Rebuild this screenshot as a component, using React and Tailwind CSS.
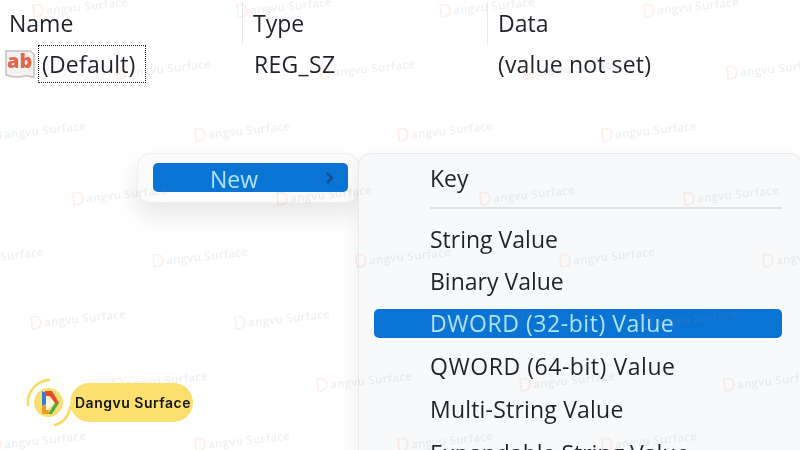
const font = { fontFamily: '"Open Sans", "Noto Sans", sans-serif' }

// watermark rows: start x, y, repeated every 203px
const marks = []
const rows = [
  [32, 14], [115, 76], [-10, 138], [72, 202], [-52, 264], [30, 326], [112, 388], [-10, 448],
]
rows.forEach(([sx, y]) => {
  for (let i = 0; i < 5; i++) marks.push({ x: sx + i * 203.5, y })
})

function Watermark({ x, y }) {
  return (
    <div
      className="absolute flex items-center origin-bottom-left -rotate-[6deg] text-[11.5px] leading-none font-semibold tracking-[0.3px] text-[#8a94a3]/15 whitespace-nowrap pointer-events-none"
      style={{ left: x, top: y - 12 }}
    >
      <span className="text-[19px] font-normal leading-none text-[#f0915f]/15 mr-px">D</span>
      <span>angvu Surface</span>
    </div>
  )
}

function AbIcon() {
  return (
    <svg width="32" height="32" viewBox="0 0 32 32" className="shrink-0">
      <path d="M2 3h24l4 3v23c-3 1-5-2-9-1-5 1-12 2-19-1z" fill="#f4f1ef" stroke="#c4c2c1" strokeWidth="1.5" />
      <text x="3" y="20" fontSize="20" fontWeight="800" fill="#e2664a" fontFamily="Open Sans, sans-serif">ab</text>
    </svg>
  )
}

function MenuItem({ children, active, wide, className = "" }) {
  return (
    <div className={`h-[42.2px] flex items-center ${className}`}>
      <div className={`flex-1 h-[29px] flex items-center pl-[56px] rounded-[5px] ${active ? "bg-[#0a74d5] text-[#aee4fb]" : "text-[#1f2329]"} ${wide ? "tracking-[0.55px]" : ""}`}>
        {children}
      </div>
    </div>
  )
}

function Logo() {
  return (
    <div className="absolute left-[24px] top-[378px] w-[172px] h-[48px]">
      <div className="absolute left-[46px] top-[5px] w-[123px] h-[39px] rounded-full bg-[#fbe06f] flex items-center pl-[5px] text-[14px] font-semibold tracking-[0.5px] text-[#15130a]" style={{ fontFamily: "Inter, sans-serif" }}>
        Dangvu Surface
      </div>
      <svg width="60" height="48" viewBox="0 0 60 48" className="absolute left-0 top-0">
        <circle cx="24.5" cy="24.5" r="14.5" fill="#fbe06f" />
        <path d="M4 27C3 14 12 3 25 2" fill="none" stroke="#fbd95c" strokeWidth="2.5" strokeLinecap="round" />
        <path d="M46 29c-1 9-7 16-15 18" fill="none" stroke="#fbd95c" strokeWidth="2.5" strokeLinecap="round" />
        <path d="M22 16l9 9-9 8z" fill="#fdf6df" />
        <path d="M18 13l4 2v11l-4 2z" fill="#2d7fd6" />
        <path d="M21 13h7l7 12h-4l-5-7h-5z" fill="#e8482f" />
        <path d="M31 25h4l-7 11h-4z" fill="#4fa945" />
        <path d="M18 28l4-2v6h3l-1 4h-6z" fill="#f39a21" />
      </svg>
    </div>
  )
}

export default function App() {
  return (
    <div className="relative w-[800px] h-[450px] overflow-hidden bg-white text-[23px] text-[#1f2329] blur-[0.5px]" style={font}>
      {/* registry list */}
      <div className="relative flex h-[44px] pt-[2px]">
        <div className="w-[243px] pl-[9px] border-r border-[#e9e9ea] flex items-center">Name</div>
        <div className="w-[245px] pl-[10px] border-r border-[#e9e9ea] flex items-center">Type</div>
        <div className="pl-[10px] flex items-center">Data</div>
      </div>
      <div className="relative flex h-[38px] mt-px">
        <div className="w-[243px] pl-[4px] flex items-center">
          <AbIcon />
          <div className="ml-[2px] h-[38px] w-[108px] pl-[3px] flex items-center border border-dotted border-[#222] tracking-[0.2px]">(Default)</div>
        </div>
        <div className="w-[245px] pl-[11px] flex items-center tracking-[0.3px]">REG_SZ</div>
        <div className="pl-[10px] flex items-center tracking-[0.15px]">(value not set)</div>
      </div>

      {/* context menu */}
      <div className="absolute left-[137px] top-[153px] w-[222px] h-[50px] rounded-[13px] bg-[#fbfbfb] border border-[#eeeff0] shadow-[0_12px_24px_rgba(0,0,0,0.10)] pl-[15px] pr-[10px] py-[9px]">
        <div className="relative h-[29px] rounded-[5px] bg-[#0a74d5] text-[#aee4fb] flex items-center justify-center pr-[33px] pt-[3px]">
          New
          <svg width="10" height="12" viewBox="0 0 10 12" className="absolute right-[13px] top-[9px]">
            <path d="M2 1l5 5-5 5" fill="none" stroke="#0d4f92" strokeWidth="2.5" />
          </svg>
        </div>
      </div>

      {/* submenu */}
      <div className="absolute left-[358px] top-[153px] w-[445px] h-[320px] rounded-[13px] bg-[#f8f9fb] border border-[#e8e9eb] shadow-[0_8px_20px_rgba(0,0,0,0.08)] pl-[15px] pr-[20px] pt-[3px]">
        <MenuItem>Key</MenuItem>
        <div className="ml-[56px] h-[2px] mt-[8px] mb-[9px] bg-[#dfe0e2]" />
        <MenuItem>String Value</MenuItem>
        <MenuItem>Binary Value</MenuItem>
        <MenuItem active wide>DWORD (32-bit) Value</MenuItem>
        <MenuItem wide>QWORD (64-bit) Value</MenuItem>
        <MenuItem className="mt-px tracking-[0.2px]">Multi-String Value</MenuItem>
        <MenuItem className="mt-[2px]">Expandable String Value</MenuItem>
      </div>

      {marks.map((m, i) => <Watermark key={i} x={m.x} y={m.y} />)}

      <Logo />
    </div>
  )
}
